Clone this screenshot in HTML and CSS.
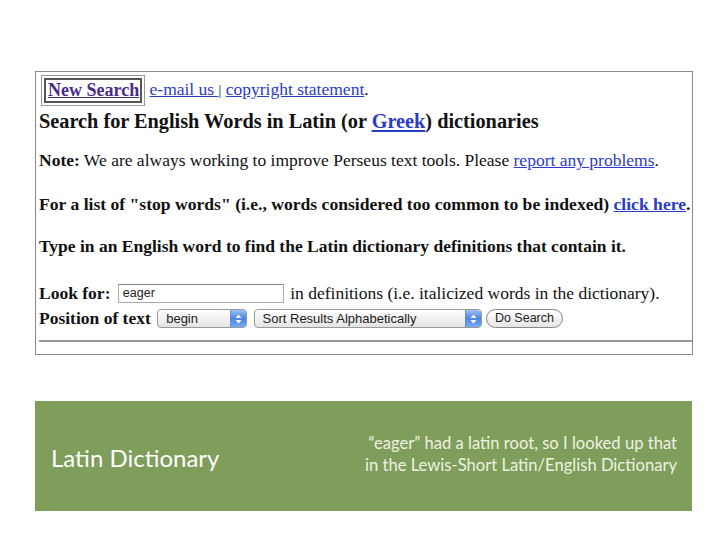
FILE: index.html
```html
<!DOCTYPE html>
<html>
<head>
<meta charset="utf-8">
<link rel="stylesheet" href="styles.css">
</head>
<body>
<div class="shot">
  <div class="row r1"><span class="ns-box"><a class="visited" href="#">New Search</a></span> <span class="topl"><a href="#">e-mail us </a><span class="bar">|</span> <a href="#">copyright statement</a>.</span></div>
  <div class="row r2">Search for English Words in Latin (or <a href="#">Greek</a>) dictionaries</div>
  <div class="row r3"><b>Note:</b> We are always working to improve Perseus text tools. Please <a href="#">report any problems</a>.</div>
  <div class="row r4">For a list of "stop words" (i.e., words considered too common to be indexed) <a href="#">click here</a>.</div>
  <div class="row r5">Type in an English word to find the Latin dictionary definitions that contain it.</div>
  <div class="row r6"><b>Look for:</b> <span class="input">eager</span> in definitions (i.e. italicized words in the dictionary).</div>
  <div class="row r7"><b>Position of text</b> <span class="sel s1"><span class="lbl">begin</span><span class="arr"><svg width="7" height="10" viewBox="0 0 7 10"><path d="M3.5 0.5 L6.5 4 H0.5 Z M3.5 9.5 L6.5 6 H0.5 Z" fill="#fff"/></svg></span></span> <span class="sel s2"><span class="lbl">Sort Results Alphabetically</span><span class="arr"><svg width="7" height="10" viewBox="0 0 7 10"><path d="M3.5 0.5 L6.5 4 H0.5 Z M3.5 9.5 L6.5 6 H0.5 Z" fill="#fff"/></svg></span></span> <span class="btn">Do Search</span></div>
  <div class="hr"></div>
</div>
<div class="band">
  <div class="title">Latin Dictionary</div>
  <div class="note">“eager” had a latin root, so I looked up that<br>in the Lewis-Short Latin/English Dictionary</div>
</div>
</body>
</html>
```
FILE: styles.css
```css
html, body { margin: 0; padding: 0; background: #fff; }
body { width: 728px; height: 546px; overflow: hidden; }
.shot {
  margin: 71px 0 0 35px;
  width: 656px;
  height: 282px;
  border: 1px solid #8a8a8a;
  font-family: "Liberation Serif", "Times New Roman", serif;
  font-size: 17.5px;
  color: #111;
  overflow: hidden;
  white-space: nowrap;
}
a { color: #2a3cc8; text-decoration: underline; }
a.visited { color: #4a2a8a; }
.row { padding-left: 3px; height: 24px; line-height: 24px; }
.r1 { height: 34px; line-height: 34px; padding-left: 5px; }
.ns-box {
  display: inline-block;
  vertical-align: middle;
  border: 1px solid #999;
  padding: 2px;
  line-height: 20px;
}
.ns-box a {
  display: inline-block;
  border: 2px solid #555;
  padding: 0 1px 1px 2px;
  font-weight: bold;
  font-size: 18px;
  line-height: 20px;
}
.topl { font-size: 17.5px; }
.bar { font-size: 14px; }
.r2 { margin-top: 3px; font-weight: bold; font-size: 20.3px; }
.r3 { margin-top: 15px; }
.r4 { margin-top: 20px; font-weight: bold; font-size: 17.6px; }
.r5 { margin-top: 18px; font-weight: bold; }
.r6 { margin-top: 23px; }
.r7 { margin-top: 1px; }
.input {
  display: inline-block;
  vertical-align: middle;
  box-sizing: border-box;
  width: 166px;
  height: 19px;
  border: 1px solid #aaa;
  border-top-color: #888;
  margin: -2px 2px 0 3px;
  font-family: "Liberation Sans", Arial, sans-serif;
  font-size: 12.5px;
  line-height: 17px;
  padding-left: 4px;
  color: #222;
}
.sel {
  display: inline-flex;
  vertical-align: middle;
  box-sizing: border-box;
  align-items: center;
  height: 19px;
  border: 1px solid #999;
  border-radius: 4px;
  background: linear-gradient(#fff, #e4e4e4);
  font-family: "Liberation Sans", Arial, sans-serif;
  font-size: 13px;
  line-height: 17px;
  color: #222;
  overflow: hidden;
  margin: -2px 0 0 2px;
}
.s1 { width: 90px; }
.s2 { width: 228px; }
.sel .lbl { flex: 1; padding-left: 8px; }
.sel .arr {
  width: 15px; height: 19px;
  background: linear-gradient(#a6c8f4, #4a86e2 50%, #7ab0f4);
  display: flex; align-items: center; justify-content: center;
  border-left: 1px solid #6a8ec8;
}
.btn {
  display: inline-flex;
  vertical-align: middle;
  box-sizing: border-box;
  align-items: center;
  justify-content: center;
  margin: -2px 0 0 0;
  width: 77px;
  height: 19px;
  border: 1px solid #888;
  border-radius: 10px;
  background: linear-gradient(#fff, #e6e6e6);
  font-family: "Liberation Sans", Arial, sans-serif;
  font-size: 12.5px;
  line-height: 17px;
  color: #222;
}
.hr { margin: 10px 0 0 3px; height: 0; border-top: 2px solid #999; }
.band {
  margin: 46px 0 0 35px;
  width: 657px;
  height: 110px;
  background: #7f9d5b;
  display: flex;
  align-items: center;
  justify-content: space-between;
  font-family: "Lato", "Open Sans", sans-serif;
}
.title { color: #fff; font-size: 24px; padding-left: 16px; margin-top: 2px; }
.note { color: #eef2e0; font-size: 16.6px; text-align: right; padding-right: 15px; line-height: 22px; margin-top: -4px; }
```
